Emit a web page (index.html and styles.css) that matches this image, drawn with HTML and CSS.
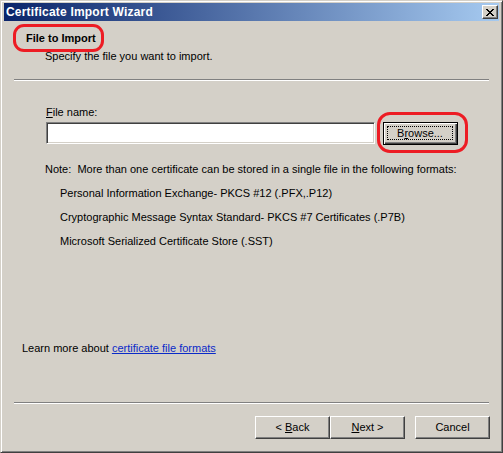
FILE: index.html
```html
<!DOCTYPE html>
<html>
<head>
<meta charset="utf-8">
<link rel="stylesheet" href="styles.css">
</head>
<body>
<div class="window">
  <div class="titlebar">
    <span class="title">Certificate Import Wizard</span>
    <span class="close-btn">
      <svg width="8" height="7" viewBox="0 0 8 7"><path d="M0 0h2v1h1v1h2V1h1V0h2v1H7v1H6v1H5v1h1v1h1v1h1v1H6V6H5V5H3v1H2v1H0V6h1V5h1V4h1V3H2V2H1V1H0z" fill="#000"/></svg>
    </span>
  </div>
  <div class="header">
    <div class="heading-wrap"><span class="heading annotated">File to Import</span></div>
    <div class="subtitle">Specify the file you want to import.</div>
  </div>
  <div class="sep"></div>
  <div class="content">
    <div class="label"><u>F</u>ile name:</div>
    <div class="file-row">
      <div class="textbox"></div>
      <div class="btn btn-default annotated-btn"><span class="focus"><span>B<u>r</u>owse...</span></span></div>
    </div>
    <div class="note">Note:&nbsp; More than one certificate can be stored in a single file in the following formats:</div>
    <ul class="formats">
      <li>Personal Information Exchange- PKCS #12 (.PFX,.P12)</li>
      <li>Cryptographic Message Syntax Standard- PKCS #7 Certificates (.P7B)</li>
      <li>Microsoft Serialized Certificate Store (.SST)</li>
    </ul>
    <div class="learn">Learn more about <a class="link">certificate file formats</a></div>
  </div>
  <div class="sep"></div>
  <div class="footer">
    <div class="btn"><span>&lt; <u>B</u>ack</span></div>
    <div class="btn"><span><u>N</u>ext &gt;</span></div>
    <div class="btn btn-cancel"><span>Cancel</span></div>
  </div>
</div>
</body>
</html>
```
FILE: styles.css
```css
html, body {
  margin: 0;
  padding: 0;
  background: #d4d0c8;
}
body {
  font-family: "Liberation Sans", Arial, sans-serif;
  font-size: 11px;
  line-height: 13px;
  color: #000;
}
.window {
  width: 503px;
  height: 453px;
  box-sizing: border-box;
  background: #d4d0c8;
  border: 1px solid;
  border-color: #d4d0c8 #404040 #404040 #d4d0c8;
  box-shadow: inset 1px 1px #ffffff, inset -1px -1px #808080;
  padding: 2px 3px 3px 3px;
  display: flex;
  flex-direction: column;
}
.titlebar {
  height: 18px;
  flex: none;
  background: linear-gradient(to right, #0a246a, #a6caf0);
  display: flex;
  align-items: center;
  justify-content: space-between;
  padding-left: 2px;
  padding-right: 1px;
}
.title {
  color: #fff;
  font-weight: bold;
  font-size: 12px;
  letter-spacing: 0.2px;
}
.close-btn {
  width: 16px;
  height: 14px;
  box-sizing: border-box;
  background: #d4d0c8;
  border: 1px solid;
  border-color: #fff #404040 #404040 #fff;
  box-shadow: inset -1px -1px #808080;
  display: flex;
  align-items: center;
  justify-content: center;
  padding-right: 1px;
}
.close-btn svg { display: block; }
.header {
  height: 58px;
  flex: none;
  box-sizing: border-box;
  padding-top: 11px;
}
.heading-wrap {
  padding-left: 22px;
  height: 13px;
}
.heading {
  font-weight: bold;
  position: relative;
  display: inline-block;
}
.annotated::before {
  content: "";
  position: absolute;
  left: -13px;
  top: -8px;
  width: 91px;
  height: 28px;
  border: 3px solid #ed1c24;
  border-radius: 11px;
  box-sizing: border-box;
}
.subtitle {
  margin-top: 5px;
  padding-left: 41px;
}
.sep {
  flex: none;
  margin: 0 10px;
  border-top: 1px solid #808080;
  border-bottom: 1px solid #fff;
  height: 0;
}
.content {
  flex: 1;
  display: flex;
  flex-direction: column;
}
.label {
  margin-top: 25px;
  padding-left: 42px;
}
.file-row {
  display: flex;
  align-items: flex-start;
  margin-top: 3px;
  padding-left: 42px;
}
.textbox {
  width: 329px;
  height: 22px;
  box-sizing: border-box;
  background: #fff;
  border: 1px solid;
  border-color: #808080 #fff #fff #808080;
  box-shadow: inset 1px 1px #404040, inset -1px -1px #d4d0c8;
}
.btn {
  width: 75px;
  height: 23px;
  box-sizing: border-box;
  background: #d4d0c8;
  border: 1px solid;
  border-color: #fff #404040 #404040 #fff;
  box-shadow: inset -1px -1px #808080;
  display: flex;
  align-items: center;
  justify-content: center;
  padding-bottom: 1px;
}
.btn-default {
  margin-left: 8px;
  border: 1px solid #000;
  box-shadow: inset 1px 1px #fff, inset -1px -1px #404040, inset -2px -2px #808080;
  position: relative;
}
.btn-default .focus {
  position: absolute;
  left: 3px;
  top: 3px;
  right: 4px;
  bottom: 4px;
  border: 1px dotted #000;
  display: flex;
  align-items: center;
  justify-content: center;
}
.annotated-btn::before {
  content: "";
  position: absolute;
  left: -7px;
  top: -11px;
  width: 91px;
  height: 41px;
  border: 3px solid #ed1c24;
  border-radius: 13px;
  box-sizing: border-box;
}
.note {
  margin-top: 18px;
  padding-left: 41px;
}
.formats {
  list-style: none;
  margin: 0;
  padding: 0 0 0 56px;
}
.formats li {
  margin-top: 11px;
}
.learn {
  margin-top: auto;
  margin-bottom: 47px;
  padding-left: 18px;
}
.link {
  color: #0a2ac8;
  text-decoration: underline;
}
.footer {
  height: 45px;
  flex: none;
  box-sizing: border-box;
  display: flex;
  justify-content: flex-end;
  align-items: flex-start;
  padding-top: 12px;
  padding-right: 9px;
}
.btn-cancel {
  margin-left: 10px;
}
```
